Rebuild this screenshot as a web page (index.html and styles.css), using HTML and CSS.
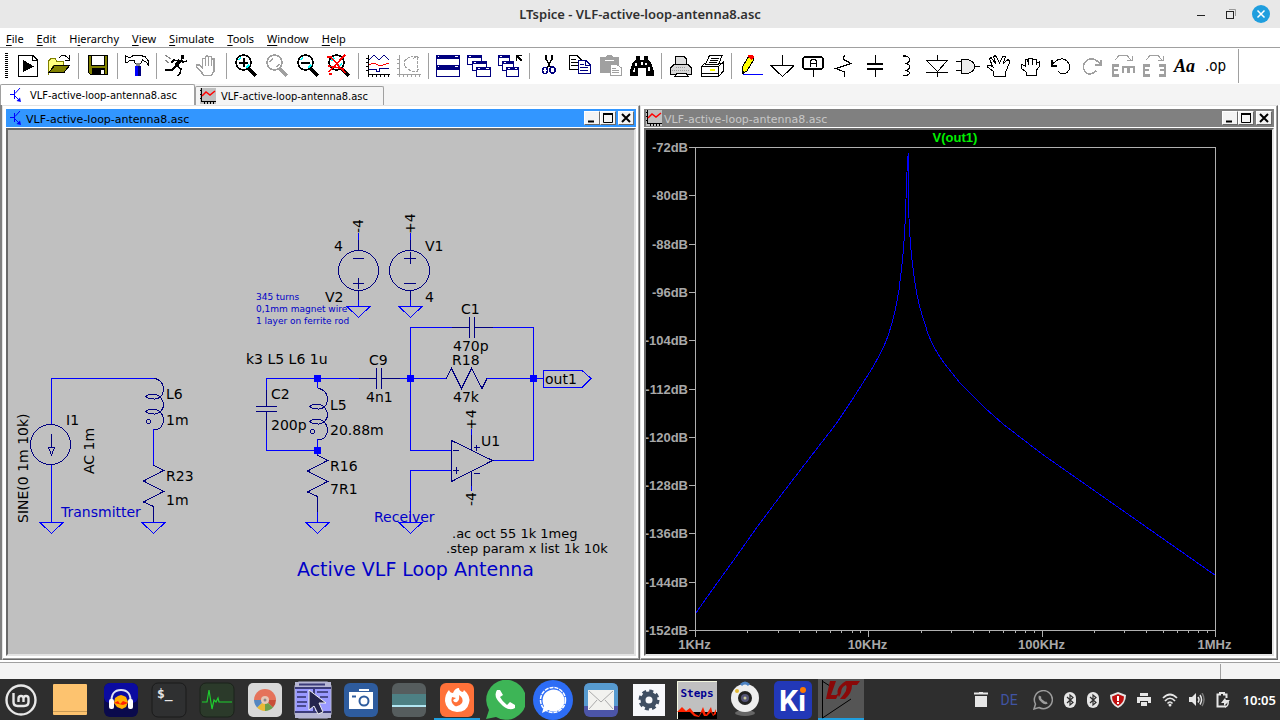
FILE: index.html
```html
<!DOCTYPE html>
<html lang="en">
<head>
    <meta charset="UTF-8">
    <meta name="viewport" content="width=device-width, initial-scale=1.0">
    <title>LTspice - VLF-active-loop-antenna8.asc</title>
    <link rel="stylesheet" href="styles.css">
</head>
<body>
    <!-- Shared icons -->
    <svg class="defs" width="0" height="0">
        <symbol id="ic-schematic" viewBox="0 0 12 16">
            <path d="M0 7.500H4M4.500 3V12M5 6.500L10 1M5 9L9 13" fill="none" stroke="#00f"/>
            <path d="M11 15L6.500 14L10 10.500Z" fill="#00f"/>
        </symbol>
        <symbol id="ic-plot" viewBox="0 0 16 16">
            <rect width="16" height="16" fill="#c0c0c0"/>
            <path d="M1.500 0V14M1 13.500H16M0 2.500H2M0 6.500H2M0 10.500H2M4.500 13V16M7.500 13V16M10.500 13V16M13.500 13V16" stroke="#000" fill="none"/>
            <path d="M2 8L6 4L10 7L15 3" stroke="#f00" stroke-width="1.500" fill="none"/>
        </symbol>
        <symbol id="ic-min" viewBox="0 0 10 10"><path d="M1 8.500H7" stroke="#000" stroke-width="2"/></symbol>
        <symbol id="ic-max" viewBox="0 0 10 10"><path d="M1 1.500H9M.500 1V9.500H9.500V1" fill="none" stroke="#000"/><path d="M0 1H10" stroke="#000" stroke-width="2"/></symbol>
        <symbol id="ic-close" viewBox="0 0 10 10"><path d="M1 1L9 9M9 1L1 9" stroke="#000" stroke-width="2"/></symbol>
        <symbol id="ic-lens" viewBox="0 0 24 24">
            <path d="M15 15L22 22" stroke="currentColor" stroke-width="3"/>
            <circle cx="9.500" cy="8.500" r="7.500" fill="#fff" stroke="currentColor" stroke-width="1.500"/>
        </symbol>
        <symbol id="ic-bluetooth" viewBox="0 0 12 16">
            <rect width="12" height="16" rx="6" fill="#e6e6e6"/>
            <path d="M3 5L9 10.500L6 13V3L9 5.500L3 11" fill="none" stroke="#2e2e2e" stroke-width="1.200"/>
        </symbol>
    </svg>

    <header class="titlebar">
        <h1>LTspice - VLF-active-loop-antenna8.asc</h1>
        <div class="titlebar-buttons">
            <button aria-label="Minimize"><svg width="10" height="10"><path d="M1 6.500H9" stroke="#222"/></svg></button>
            <button aria-label="Restore"><svg width="10" height="10"><path d="M3 .500H9.500V7" fill="none" stroke="#999"/><rect x=".500" y="2.500" width="7" height="7" fill="none" stroke="#222"/></svg></button>
            <button class="close" aria-label="Close"><svg width="10" height="10"><path d="M1.500 1.500L8.500 8.500M8.500 1.500L1.500 8.500" stroke="#fff" stroke-width="1.500"/></svg></button>
        </div>
    </header>

    <nav class="menubar">
        <button><u>F</u>ile</button>
        <button><u>E</u>dit</button>
        <button>H<u>i</u>erarchy</button>
        <button><u>V</u>iew</button>
        <button><u>S</u>imulate</button>
        <button><u>T</u>ools</button>
        <button><u>W</u>indow</button>
        <button><u>H</u>elp</button>
    </nav>

    <div class="toolbar">
        <span class="grip"></span>
        <button aria-label="New schematic"><svg viewBox="0 0 24 24"><path d="M2.500 1.500H17L21.500 6V22.500H2.500Z" fill="#fff" stroke="#000"/><path d="M16.500 1V6.500H22" fill="none" stroke="#000"/><path d="M7 6L18 12.500L7 18Z"/></svg></button>
        <button aria-label="Open"><svg viewBox="0 0 24 24"><path d="M1.500 20V7L4 4.500H8L9.500 7H16.500V11H7L1.500 20Z" fill="#ffff80" stroke="#808000"/><path d="M7.500 11.500H22.500L17 18.500H2Z" fill="#808000" stroke="#000"/><path d="M12 3.500L15 1.500H18L22 5M22.500 1V6H17.500" fill="none" stroke="#000"/></svg></button>
        <span class="sep"></span>
        <button aria-label="Save"><svg viewBox="0 0 24 24"><path d="M2.500 1.500H21.500V20.500H4.500L2.500 18.500Z" fill="#808000" stroke="#000"/><path d="M6 2H18V11H6Z" fill="#fff"/><path d="M5.500 2V11.500H18.500V2" fill="none" stroke="#000"/><path d="M6 14H19V20H6Z"/><path d="M15 16H18V20H15Z" fill="#fff"/></svg></button>
        <span class="sep"></span>
        <button aria-label="Control panel"><svg viewBox="0 0 24 24"><path d="M.500 2V8H3L5 6L9 6.500L10 9H16L17.500 6L21 8L23.500 11V7L20 2.500L15 1.500H8L5 4Z" fill="#fff" stroke="#000"/><path d="M11 9H15V13H11Z" fill="#888"/><path d="M10 12H16V22H10Z" fill="#00f"/><path d="M13 12H16V22H13Z" fill="#000080"/></svg></button>
        <span class="sep"></span>
        <button aria-label="Run"><svg viewBox="0 0 24 24"><path d="M17 1H20V5H17Z"/><path d="M16 6L12 12" stroke="#000" stroke-width="4"/><path d="M17 6L19 8L23 7M14 7L10 6L7 9M12 12L8 16H1M13 12L17 15L16 19L14 22" fill="none" stroke="#000" stroke-width="1.500"/><path d="M1 1L7 5M1 6L5 9" stroke="#888"/></svg></button>
        <button aria-label="Halt" disabled><svg viewBox="0 0 24 24"><path d="M7 19L1.500 13V11H4L7.500 14V4.500H10.500V2.500L12 1.500L13.500 3V2.500H16.500V5H19V17L16.500 21.500H9Z" fill="#fff" stroke="#a0a0a0" stroke-width="1.500"/><path d="M10.500 5V12M13.500 3V12M16.500 5V12" stroke="#a0a0a0" stroke-width="1.500"/></svg></button>
        <span class="sep"></span>
        <button aria-label="Zoom in"><svg viewBox="0 0 24 24"><use href="#ic-lens"/><path d="M4.500 6L7 3.500M12 14L15 11" stroke="#0ff" stroke-width="1.500"/><path d="M5 8.500H14M9.500 4V13" stroke="#000" stroke-width="2"/></svg></button>
        <button class="off" aria-label="Zoom to fit" disabled><svg viewBox="0 0 24 24"><use href="#ic-lens"/><path d="M5 8L8 4.500M12 13L14 10" stroke="#a0a0a0" stroke-width="1.500"/></svg></button>
        <button aria-label="Zoom out"><svg viewBox="0 0 24 24"><use href="#ic-lens"/><path d="M4.500 6L7 3.500M12 14L15 11" stroke="#0ff" stroke-width="1.500"/><path d="M5 8.500H14" stroke="#000" stroke-width="2"/></svg></button>
        <button aria-label="Zoom full"><svg viewBox="0 0 24 24"><use href="#ic-lens"/><path d="M4 7L7 4M11 13L15 10" stroke="#0ff" stroke-width="1.500"/><path d="M0 3L4 3L18 19M18 1L13 6L2 18M2 20H5M1 12L8 13L17 15" fill="none" stroke="#f00" stroke-width="1.500"/></svg></button>
        <span class="sep"></span>
        <button aria-label="Autorange"><svg viewBox="0 0 24 24"><path d="M2.500 1V23M2 20.500H24M0 4.500H3M0 8.500H3M0 12.500H3M0 16.500H3M6.500 20V23M10.500 20V23M14.500 20V23M18.500 20V23M22.500 20V23" stroke="#000" fill="none"/><path d="M3 6L8 1L13 6L18 1L23 6M3 15.500H10V17.500H13V14.500H23" stroke="#000080" fill="none"/><path d="M3 10.500L8 9L14 12L23 9" stroke="#f00" fill="none"/></svg></button>
        <button class="off" aria-label="Mark data points" disabled><svg viewBox="0 0 24 24"><path d="M2.500 1V23M0 20.500H24M0 5.500H3M0 9.500H3M0 14.500H3M6.500 20V23M10.500 20V23M14.500 20V23M18.500 20V23M22.500 20V23" stroke="#a0a0a0" fill="none"/><path d="M7 7L14 2H20V17H14L7 12ZM20 2L16 5M20 2L23 5M20 17L23 14" stroke="#a0a0a0" fill="none" stroke-dasharray="3 1"/></svg></button>
        <span class="sep"></span>
        <button aria-label="Tile windows"><svg viewBox="0 0 24 24"><path d="M.500 1.500H23.500V22.500H.500Z" fill="#fff" stroke="#000080"/><path d="M0 1H24V5H0ZM0 11H24V16H0Z" fill="#000080"/><path d="M2 2H3V3H2ZM19 2H22V3H19ZM2 12H3V13H2ZM19 12H22V13H19Z" fill="#fff"/></svg></button>
        <button aria-label="Cascade windows"><svg viewBox="0 0 24 24"><g fill="#fff" stroke="#000080"><path d="M.500 1.500H14.500V10.500H.500Z"/><path d="M5.500 7.500H19.500V16.500H5.500Z"/><path d="M9.500 13.500H23.500V22.500H9.500Z"/></g><path d="M0 1H15V4H0ZM5 7H20V10H5ZM9 13H24V16H9Z" fill="#000080"/><path d="M2 2H4V3H2ZM7 8H9V9H7ZM11 14H13V15H11ZM19 14H22V15H19Z" fill="#fff"/></svg></button>
        <button aria-label="Close windows"><svg viewBox="0 0 24 24"><g fill="#fff" stroke="#000080"><path d="M.500 1.500H11.500V11.500H.500Z"/><path d="M4.500 7.500H15.500V16.500H4.500Z"/><path d="M8.500 13.500H20.500V22.500H8.500Z"/></g><path d="M0 1H12V4H0ZM4 7H16V10H4ZM8 13H21V16H8Z" fill="#000080"/><path d="M2 2H4V3H2ZM6 8H8V9H6ZM10 14H12V15H10ZM17 14H19V15H17Z" fill="#fff"/><path d="M18.500 7V1.500H24M19 2L24 7" fill="none" stroke="#000" stroke-width="1.500"/></svg></button>
        <span class="sep"></span>
        <button aria-label="Cut"><svg viewBox="0 0 24 24"><path d="M9 1V5L14 14M15 1V5L10 14" fill="none" stroke="#000" stroke-width="1.500"/><ellipse cx="8" cy="16.500" rx="2.500" ry="3" fill="none" stroke="#000080" stroke-width="1.500"/><ellipse cx="15.500" cy="16" rx="2.500" ry="3" fill="none" stroke="#000080" stroke-width="1.500"/></svg></button>
        <button aria-label="Copy"><svg viewBox="0 0 24 24"><path d="M1.500 1.500H9L13.500 6V15.500H1.500Z" fill="#fff" stroke="#000"/><path d="M3 5.500H8M3 8.500H11M3 11.500H11" stroke="#000"/><path d="M10.500 6.500H18L22.500 11V19.500H10.500Z" fill="#fff" stroke="#000080"/><path d="M17.500 6V11.500H22M12 10.500H16M12 13.500H20M12 16.500H20" fill="none" stroke="#000080"/></svg></button>
        <button aria-label="Paste" disabled><svg viewBox="0 0 24 24"><path d="M1 3H7L8 1H13L14 3H20V19H1Z" fill="#a0a0a0"/><path d="M6 6.500H15" stroke="#fff"/><path d="M11.500 10.500H18L22.500 14V21.500H11.500Z" fill="#fff" stroke="#a0a0a0"/><path d="M13 14.500H17M13 16.500H20M13 18.500H20" stroke="#a0a0a0"/></svg></button>
        <button aria-label="Find"><svg viewBox="0 0 24 24"><path d="M6 2H10V6H14V2H18V6L21 8L24 17V22H16V14H8V22H0V17L3 8L6 6Z"/><path d="M5 9H7V12H5ZM4 14H5V18H3ZM15 9H17V11H15ZM18 13H20V17H18ZM11 8H13V11H11Z" fill="#fff"/></svg></button>
        <span class="sep"></span>
        <button aria-label="Print setup"><svg viewBox="0 0 24 24"><path d="M6.500 11V2.500H15L17.500 5V11" fill="#ddd" stroke="#000"/><path d="M1.500 14L5 10.500H19L22.500 14V20.500H1.500Z" fill="#d8d8d8" stroke="#000"/><path d="M7 13.500H17M3 16.500H21" stroke="#999" stroke-dasharray="1 1"/><path d="M7 21V19.500H17L19 22.500H6Z" fill="#fff" stroke="#000"/></svg></button>
        <button aria-label="Print"><svg viewBox="0 0 24 24"><path d="M1.500 12.500H18.500V22.500H1.500ZM18.500 12.500L23.500 8V17L18.500 22.500M1.500 12.500L5 9H22" fill="#fff" stroke="#000"/><path d="M5.500 10.500L9.500 1.500H22L18.500 10.500Z" fill="#fff" stroke="#000"/><path d="M11 4.500H19M10 6.500H18M9 8.500H17M2 19.500H18" stroke="#000"/><path d="M10 15H15V17H10Z" fill="#ff0"/></svg></button>
        <span class="sep"></span>
        <button aria-label="Wire"><svg viewBox="0 0 24 24"><path d="M9 3H14V7L8 17L3 20V14Z" fill="#ff0" stroke="#000"/><path d="M9 1H13L15 3L13 6L9 3Z" fill="#f00"/><path d="M3 16L6 18L3 20Z"/><path d="M4 20.500H24" stroke="#00f"/></svg></button>
        <button aria-label="Ground"><svg viewBox="0 0 24 24"><path d="M12.500 1V12M1 11.500H24L12.500 22.500Z" fill="none" stroke="#000" stroke-width="1.200"/></svg></button>
        <button aria-label="Label net"><svg viewBox="0 0 24 24"><path d="M12.500 16V23" stroke="#000"/><rect x="2" y="3" width="20" height="12" rx="2" fill="#fff" stroke="#000" stroke-width="1.500"/><path d="M9.500 13V7L11 5.500H14L15.500 7V13M9 9.500H16" fill="none" stroke="#000" stroke-width="1.500"/></svg></button>
        <button aria-label="Resistor"><svg viewBox="0 0 24 24"><path d="M12.500 1L11 5L19 9.500L4 14.500L12.500 18V23" fill="none" stroke="#000" stroke-width="1.200"/></svg></button>
        <button aria-label="Capacitor"><svg viewBox="0 0 24 24"><path d="M12.500 1V10M12.500 15V23" stroke="#000"/><path d="M4 10H20M4 15H20" stroke="#000" stroke-width="2"/></svg></button>
        <button aria-label="Inductor"><svg viewBox="0 0 24 24"><path d="M9 2H12Q15.500 3 15.500 6Q15.500 9 11 9.500Q15.500 10 15.500 12.500Q15.500 16 11 16.500Q15.500 17 15.500 19Q15 22 9 21.500" fill="none" stroke="#000" stroke-width="1.200"/></svg></button>
        <button aria-label="Diode"><svg viewBox="0 0 24 24"><path d="M12.500 1V6M1 6.500H23M2 7L12.500 17.500L22 7M1 18.500H23M12.500 18V23" fill="none" stroke="#000"/></svg></button>
        <button aria-label="Component"><svg viewBox="0 0 24 24"><path d="M0 7.500H5M0 16.500H5M18 12.500H24" stroke="#000"/><path d="M5.500 5.500H12Q18 7 18.500 12.500Q18 18 12 19.500H5.500Z" fill="#eee" stroke="#000"/></svg></button>
        <button aria-label="Move"><svg viewBox="0 0 24 24"><path d="M7 22L6 17L.500 13V11H3L6 13L2.500 5L4 3.500L9 10L6.500 2.500L8.500 1.500L12.500 9L16 2.500L18.500 3L16 10L21 5.500L23 7L20 15L18 19V22Z" fill="#fff" stroke="#000"/></svg></button>
        <button aria-label="Drag"><svg viewBox="0 0 24 24"><path d="M8 21V18L3 14V10L7 12V6L9 5L10 8V4H14L14.500 8V5H18V9L21 8V13L18 17V21Z" fill="#fff" stroke="#000"/><path d="M10 8V11M14.500 8V11M18 8V11" stroke="#000"/></svg></button>
        <button aria-label="Undo"><svg viewBox="0 0 24 24"><path d="M3 11Q9 3 16 5.500Q21.500 9 20.500 15Q18 20 14 20Q10 19 9 17" fill="none" stroke="#000"/><path d="M3 6V12H8" fill="none" stroke="#000" stroke-width="2"/></svg></button>
        <button aria-label="Redo" disabled><svg viewBox="0 0 24 24"><path d="M21 11Q15 3 8 5.500Q2.500 9 3.500 15Q6 20 10 20Q14 19 16 17" fill="none" stroke="#a0a0a0" stroke-width="1.500"/><path d="M21 6V11H15" fill="none" stroke="#a0a0a0" stroke-width="1.500"/></svg></button>
        <button aria-label="Rotate" disabled><svg viewBox="0 0 24 24"><path d="M4 6L8 1.500H16L20 6M21.500 2V6.500H16" fill="none" stroke="#a0a0a0"/><path d="M8 11.500H2V21.500H8M2 16H7" fill="none" stroke="#a0a0a0" stroke-width="2.500"/><path d="M11 13H24M12 12V19M17.500 12V19M23 12V19" stroke="#a0a0a0" stroke-width="2.500"/></svg></button>
        <button aria-label="Mirror" disabled><svg viewBox="0 0 24 24"><path d="M4 6L8 1.500H16L20 6M21.500 2V6.500H16" fill="none" stroke="#a0a0a0"/><path d="M8 11.500H2V21.500H8M2 16H7M17 11.500H23V21.500H17M23 16H18" fill="none" stroke="#a0a0a0" stroke-width="2.500"/></svg></button>
        <button class="glyph glyph-italic">Aa</button>
        <button class="glyph">.op</button>
        <span class="sep last"></span>
    </div>

    <div class="tabs">
        <button class="tab active"><svg width="12" height="16"><use href="#ic-schematic"/></svg>VLF-active-loop-antenna8.asc</button>
        <button class="tab"><svg width="16" height="16"><use href="#ic-plot"/></svg>VLF-active-loop-antenna8.asc</button>
    </div>

    <main class="workspace">
        <section class="window">
            <div class="window-title active">
                <svg width="12" height="16"><use href="#ic-schematic"/></svg>
                <h2>VLF-active-loop-antenna8.asc</h2>
                <button aria-label="Minimize"><svg width="10" height="10"><use href="#ic-min"/></svg></button>
                <button aria-label="Maximize"><svg width="10" height="10"><use href="#ic-max"/></svg></button>
                <button class="close" aria-label="Close"><svg width="10" height="10"><use href="#ic-close"/></svg></button>
            </div>
            <div class="client">
                <svg class="schematic">
                    <defs>
                        <path id="gnd" d="M-11 .500H12L.500 11.500Z"/>
                        <path id="coil" d="M0 0C6 0 10 5 10 10C10 18 5 21 0 20.500C-5 20 -7 19 -7.500 18C-5 15 4 15 7 19C9 21 10 24 10 26C10 32 5 36 0 35.500C-5 35 -7 34 -7.500 33C-5 30 4 30 7 34C9 36 10 38 10 42C10 46 7 50 4 51H0"/>
                        <path id="res" d="M0 0L10 5.500L-10 16L10 26.500L-10 37L0 41.500V57"/>
                    </defs>
                    <!-- shifted so that the sheet starts at 8,130 -->
                    <g transform="translate(-8 -130)">
                        <g class="wire">
                            <path d="M51.500 425V378.500H154M51.500 464V522M153.500 429V465M153.500 510V522M317.500 510V522"/>
                            <path d="M317.500 378.500H266.500V402M266.500 415V450.500H317.500V455M317.500 378V388M317.500 439V450"/>
                            <path d="M317 378.500H371M387 378.500H446M410.500 450V327.500H464M480 327.500H533.500V460.500H492M410 450.500H451M451 470.500H410.500V522"/>
                            <path d="M487 378.500H543M543.500 370.500H582L591 378.500L582 387.500H543.500Z"/>
                            <path d="M358.500 233V245M410.500 233V245M358.500 295V306M410.500 295V306M471.500 429V440M471.500 480V491"/>
                            <use href="#gnd" x="51" y="522"/>
                            <use href="#gnd" x="153" y="522"/>
                            <use href="#gnd" x="317" y="522"/>
                            <use href="#gnd" x="410" y="522"/>
                            <use href="#gnd" x="358" y="306"/>
                            <use href="#gnd" x="410" y="306"/>
                        </g>
                        <g class="part">
                            <circle cx="50.500" cy="444.500" r="20"/>
                            <path d="M51.500 434V447M48.500 447.500H54.500L51.500 455Z"/>
                            <use href="#coil" x="153.500" y="378.500"/>
                            <use href="#coil" x="317.500" y="388.500"/>
                            <circle cx="148.500" cy="421.500" r="2"/>
                            <circle cx="312.500" cy="431.500" r="2"/>
                            <use href="#res" x="153.500" y="465"/>
                            <use href="#res" x="317.500" y="455"/>
                            <path d="M446 378.500L451.500 368.500L461.500 388.500L471.500 368.500L482 388.500L487 378.500"/>
                            <path d="M256 406.500H277M256 411.500H277M266.500 390V406M266.500 412V430"/>
                            <path d="M376.500 368V389M381.500 368V389M359 378.500H376M382 378.500H400"/>
                            <path d="M469.500 317V338M474.500 317V338M452 327.500H469M475 327.500H493"/>
                            <circle cx="358.500" cy="270.500" r="20"/>
                            <path d="M358.500 240V250M358.500 290V300M353 258.500H364M353 283.500H364M358.500 278V289"/>
                            <circle cx="409.500" cy="270.500" r="20"/>
                            <path d="M410.500 240V250M410.500 290V300M404 258.500H416M410.500 252V264M404 283.500H416"/>
                            <path d="M451.500 440.500L492.500 460.500L451.500 481.500ZM453 450.500H459M453 470.500H459M456.500 467V474M471.500 435V450M471.500 471V486M474 447.500H480M476.500 445V451M474 473.500H480"/>
                        </g>
                        <g class="junction">
                            <path d="M314 375H321V382H314ZM314 447H321V454H314ZM407 375H414V382H407ZM530 375H537V382H530Z"/>
                        </g>
                        <g class="label">
                            <text x="66" y="425">I1</text>
                            <text transform="translate(28 523) rotate(-90)">SINE(0 1m 10k)</text>
                            <text transform="translate(94 474) rotate(-90)">AC 1m</text>
                            <text x="166" y="399">L6</text>
                            <text x="166" y="425">1m</text>
                            <text x="166" y="481">R23</text>
                            <text x="166" y="505">1m</text>
                            <text x="246" y="364">k3 L5 L6 1u</text>
                            <text x="271" y="399">C2</text>
                            <text x="271" y="430">200p</text>
                            <text x="330" y="410">L5</text>
                            <text x="330" y="435">20.88m</text>
                            <text x="330" y="471">R16</text>
                            <text x="330" y="494">7R1</text>
                            <text x="369" y="365">C9</text>
                            <text x="366" y="402">4n1</text>
                            <text x="461" y="314">C1</text>
                            <text x="453" y="351">470p</text>
                            <text x="452" y="365">R18</text>
                            <text x="453" y="402">47k</text>
                            <text x="481" y="446">U1</text>
                            <text x="545" y="384">out1</text>
                            <text x="334" y="251">4</text>
                            <text x="325" y="302">V2</text>
                            <text x="425" y="251">V1</text>
                            <text x="425" y="302">4</text>
                            <text transform="translate(363 233) rotate(-90)">-4</text>
                            <text transform="translate(415 234) rotate(-90)">+4</text>
                            <text transform="translate(476 430) rotate(-90)">+4</text>
                            <text transform="translate(476 506) rotate(-90)">-4</text>
                        </g>
                        <g class="directive">
                            <text x="452" y="538">.ac oct 55 1k 1meg</text>
                            <text x="446" y="553">.step param x list 1k 10k</text>
                        </g>
                        <g class="comment">
                            <text x="61" y="517">Transmitter</text>
                            <text x="374" y="522">Receiver</text>
                            <text class="heading" x="297" y="576">Active VLF Loop Antenna</text>
                            <text class="small" x="256" y="300">345 turns</text>
                            <text class="small" x="256" y="312">0,1mm magnet wire</text>
                            <text class="small" x="256" y="324">1 layer on ferrite rod</text>
                        </g>
                    </g>
                </svg>
            </div>
        </section>

        <section class="window">
            <div class="window-title">
                <svg width="16" height="16"><use href="#ic-plot"/></svg>
                <h2>VLF-active-loop-antenna8.asc</h2>
                <button aria-label="Minimize"><svg width="10" height="10"><use href="#ic-min"/></svg></button>
                <button aria-label="Maximize"><svg width="10" height="10"><use href="#ic-max"/></svg></button>
                <button class="close" aria-label="Close"><svg width="10" height="10"><use href="#ic-close"/></svg></button>
            </div>
            <div class="client dark">
                <svg class="plot">
                    <g transform="translate(-646 -130)">
                        <text class="trace-name" x="955" y="142">V(out1)</text>
                        <rect class="axis" x="695.500" y="147.500" width="520" height="483"/>
                        <path class="axis" id="ticks" d=""/>
                        <g id="labels"></g>
                        <path class="trace" d="M695.500 613.500L715 586L734.500 559L755 530L775 503L805 464L836 424L852 400L859 389L866 378L873 367L879 356L884 346L888 336L892 323L895 311L897 301L899 290L900.500 277L901.500 269L902.500 260L903.500 248L904.500 234L905.500 214L906.500 184L907.500 160L908.500 153L908.500 206L909.500 230L910.500 244L911.500 256L913 268L915 283L917 295L920 308L923 318L926 327L928 334L933 345L938 354L944 363L952 373L960 383L985 408L1003 424L1042 454L1215.500 575.500"/>
                    </g>
                </svg>
            </div>
        </section>
    </main>

    <footer class="statusbar"><span></span><span class="status-end"></span></footer>

    <div class="taskbar">
        <div class="launchers">
            <button class="start" aria-label="Menu"><svg width="36" height="36"><circle cx="18" cy="18" r="14.500" fill="none" stroke="#e8e8e8" stroke-width="2.400"/><path d="M10.500 11V20Q10.500 24 14.500 24H21Q25.500 24 25.500 20V16.500Q25.500 14 23 14Q20.500 14 20.500 16.500V20M20.500 16.500Q20.500 14 18 14Q15.500 14 15.500 16.500V20" fill="none" stroke="#e8e8e8" stroke-width="2.400"/></svg></button>
            <button class="files" aria-label="Files"><svg width="36" height="36"><rect x="1" y="2" width="34" height="31" rx="1" fill="#fdc36f"/><path d="M1 29.500H35" stroke="#c99a55"/></svg></button>
            <button aria-label="Audacity"><svg width="36" height="36"><rect x="1" y="1" width="34" height="34" rx="6" fill="#0a0a4c"/><rect x="1" y="1" width="34" height="20" rx="6" fill="#0b0ba0"/><path d="M8.500 20Q8 8 18 8Q28 8 27.500 20" fill="none" stroke="#dfe3f5" stroke-width="2"/><path d="M12 16L15 14L18 13L21 14L23 15L25 20L23 25L19 27L14 25L11 21Z" fill="#ffb000"/><path d="M11 21L15 19L17 22L20 19L25 21L20 23Z" fill="#f20"/><rect x="6" y="17" width="5" height="10" rx="2" fill="#fff"/><rect x="25" y="17" width="5" height="10" rx="2" fill="#fff"/></svg></button>
            <button aria-label="Terminal"><svg width="36" height="36"><rect x="1" y="1" width="34" height="34" rx="6" fill="#2f3031" stroke="#1b1b1b"/><text class="prompt" x="6" y="16">$_</text></svg></button>
            <button aria-label="System monitor"><svg width="36" height="36"><rect x="1" y="1" width="34" height="34" rx="6" fill="#2b3a2a" stroke="#1b221a"/><path d="M3 20H8L10 8L13 27L15 18L17 20L19 16L20 20H33" fill="none" stroke="#1fcf2f" stroke-width="1.200"/></svg></button>
            <button aria-label="Disk usage"><svg width="36" height="36"><rect x="1" y="1" width="34" height="34" rx="5" fill="#d8d8d8"/><path d="M18 18L7 18A11 11 0 0 1 29 18Z" fill="#e5725a"/><path d="M18 18H29A11 11 0 0 1 26 25.500Z" fill="#c84f3a"/><path d="M18 18L26 25.500A11 11 0 0 1 18 29Z" fill="#6c9e4a"/><path d="M18 18V29A11 11 0 0 1 10 25.500Z" fill="#e9b935"/><path d="M18 18L10 25.500A11 11 0 0 1 7 18Z" fill="#5486c0"/><circle cx="18" cy="18" r="4" fill="#e6c6b6"/><circle cx="18" cy="18" r="1.500" fill="#888"/></svg></button>
            <button aria-label="Window manager"><svg width="38" height="38"><rect x="1" y="1" width="36" height="36" rx="4" fill="#9999ff" stroke="#b9b9d9"/><path d="M1 1H37V6H1ZM1 32H37V37H1Z" fill="#b6b6d4"/><path d="M5 3.500H31M1 7H37M1 31H37M20 7V31" stroke="#3b3b7a" stroke-width="2"/><path d="M3 11H13M3 16H12M3 21H13M3 25H12M23 11H34M26 16H34" stroke="#30306a" stroke-width="1.500"/><path d="M15 9L32 22H25L29 31L24 33L20 25L15 29Z" fill="#25254d" stroke="#eee"/></svg></button>
            <button aria-label="Screenshot"><svg width="36" height="36"><rect x="1" y="1" width="34" height="34" rx="6" fill="#2e5c9e"/><rect x="6" y="10" width="24" height="17" fill="#fff"/><path d="M16 8H26" stroke="#fff" stroke-width="2"/><circle cx="21" cy="19" r="4.500" fill="#fff" stroke="#2e5c9e" stroke-width="2"/><path d="M9 14.500H13" stroke="#2e5c9e" stroke-width="2"/></svg></button>
            <button aria-label="Desktop"><svg width="36" height="36"><rect x="1" y="1" width="34" height="34" rx="6" fill="#565d5e"/><path d="M1 12H35V23H1Z" fill="#4d8084"/><path d="M1 24H35" stroke="#b2e6f2" stroke-width="2"/></svg></button>
            <button class="running" aria-label="Firefox"><svg width="36" height="36"><rect x="1" y="1" width="34" height="34" rx="6" fill="#ff7139"/><path d="M6 19Q6 12 10 8Q11 11 14 11Q16 6 20 6Q20 9 24 10L25 8Q32 14 30 21Q28 30 18 30Q7 29 6 19Z" fill="#fff"/><path d="M13 15L17 16L14 18Q15 21 18 20Q21 18 20 13Q25 16 23 21Q20 25 16 24Q11 21 13 15Z" fill="#ff7139"/></svg></button>
            <button aria-label="WhatsApp"><svg width="40" height="40"><path d="M1 39L4 30A20 20 0 1 1 11 37Z" fill="#3db556"/><path d="M12 10Q8 16 15 23Q23 32 30 28L30 25L25 22L22 25Q17 21 15 17L18 15L15 10Z" fill="#fff"/></svg></button>
            <button aria-label="Signal"><svg width="40" height="40"><circle cx="20" cy="20" r="20" fill="#2d6df6"/><circle cx="20" cy="20" r="12.500" fill="none" stroke="#fff" stroke-width="1.500" stroke-dasharray="4 1"/><path d="M9 33L11 26A11 11 0 1 1 15 30Z" fill="#fff"/></svg></button>
            <button aria-label="Mail"><svg width="36" height="36"><rect x="1" y="1" width="34" height="34" rx="6" fill="#4c55a8"/><path d="M1 24V7Q1 1 7 1H29Q35 1 35 7V24Z" fill="#579bd0"/><rect x="5" y="8" width="26" height="20" fill="#f2f2ef"/><path d="M6 9L18 20L30 9M6 27L14 18M30 27L22 18" fill="none" stroke="#aaa"/></svg></button>
            <button aria-label="Settings"><svg width="32" height="32"><rect width="32" height="32" fill="#f7f8fb"/><circle cx="16" cy="16" r="9" fill="none" stroke="#3f4e62" stroke-width="3" stroke-dasharray="4 3.070"/><circle cx="16" cy="16" r="6" fill="none" stroke="#3f4e62" stroke-width="5"/></svg></button>
            <button aria-label="Steps"><svg width="40" height="38"><rect width="40" height="38" fill="#c0c0c0"/><path d="M0 31H40V38H0Z"/><path d="M.500 38V.500H40" fill="none" stroke="#f4f8e0"/><text class="steps" x="20" y="16">Steps</text><path d="M0 31L5 26L9 30L13 27L18 33L22 35L26 26L29 34L34 26L36 34L39 28V33L36 35L34 31L30 35H27L25 31L22 36L17 35L13 31H1Z" fill="#f20"/></svg></button>
            <button aria-label="Webcam"><svg width="36" height="40"><ellipse cx="18" cy="33" rx="10" ry="3" fill="#666"/><circle cx="18" cy="18" r="14" fill="#eee"/><path d="M14 5Q18 1 22 5" stroke="#4d83c4" stroke-width="3" fill="none"/><circle cx="18" cy="18" r="7" fill="#222"/><circle cx="18" cy="18" r="4" fill="#557"/><circle cx="18" cy="18" r="1.500" fill="#cc9"/><circle cx="10" cy="11" r="2" fill="#e4ba32"/></svg></button>
            <button aria-label="KiCad"><svg width="38" height="38"><rect width="38" height="38" rx="5" fill="#2238b8"/><text class="kicad" x="5" y="30">K&#305;</text><circle cx="29" cy="9" r="3" fill="#ff7a00"/></svg></button>
            <button class="running current" aria-label="LTspice"><svg width="46" height="39"><path d="M4.500 0V38L33 19M4 1L12 6" stroke="#000" fill="none"/><path d="M12 1H18L13 15H18L21 13L18 19H8Z" fill="#8a0808"/><path d="M28 1H42L39 5H34Q34 13 27 19H22Q31 9 28 5Q23 7 23 13L21 17Q16 8 28 1Z" fill="#8a0808"/></svg></button>
        </div>
        <div class="tray">
            <svg width="14" height="16"><path d="M0 1.500H14M5 .500H9" stroke="#e6e6e6" stroke-width="2"/><path d="M1 4H13V15H1Z" fill="#e6e6e6"/></svg>
            <span class="lang">DE</span>
            <svg width="20" height="20"><path d="M1 19L2.500 14A9 9 0 1 1 6 17.500Z" fill="none" stroke="#9c9c9c" stroke-width="1.500"/><path d="M7 6Q6 9 9 11Q12 14 14 12.500" fill="none" stroke="#9c9c9c" stroke-width="2.500"/></svg>
            <svg width="12" height="16"><use href="#ic-bluetooth"/></svg>
            <svg width="12" height="16"><use href="#ic-bluetooth"/></svg>
            <svg width="16" height="16"><path d="M8 0L16 3Q16 12 8 16Q0 12 0 3Z" fill="#e6e6e6"/><path d="M8 2L14 4.500Q14 11 8 14Q2 11 2 4.500Z" fill="#c01010"/><path d="M8 4V9M8 10V12" stroke="#fff" stroke-width="2"/></svg>
            <svg width="14" height="14"><path d="M3 0H11V3H3ZM0 4H14V10H11V8H3V10H0ZM4 9H10V13H4Z" fill="#e6e6e6"/></svg>
            <svg width="16" height="14"><path d="M1 5Q8 -2 15 5M3 8Q8 2.500 13 8M5.500 10.500Q8 7.500 10.500 10.500" fill="none" stroke="#e6e6e6" stroke-width="1.700"/><circle cx="8" cy="12" r="1.500" fill="#e6e6e6"/></svg>
            <svg width="16" height="14"><path d="M0 4H3L7 0V13L3 9H0Z" fill="#e6e6e6"/><path d="M9 4Q11 6.500 9 9.500M11 2Q14 6.500 11 11.500" fill="none" stroke="#e6e6e6" stroke-width="1.500"/><path d="M13 0Q17 6.500 13 13" fill="none" stroke="#777" stroke-width="1.500"/></svg>
            <svg width="16" height="16"><path d="M10 14.500H1.500V2.500H4V1H8V2.500H10.500V6" fill="none" stroke="#e6e6e6" stroke-width="2"/><path d="M9 6L5 11H8V14L14 8H10Z" fill="#e6e6e6"/><path d="M9 15Q13 14 12 9" fill="none" stroke="#e6e6e6" stroke-width="1.500"/></svg>
            <time>10:05</time>
        </div>
    </div>

    <script>
        const ticks = document.getElementById('ticks');
        const labels = document.getElementById('labels');
        const left = 695.5, top0 = 147.5, bottom = 630.5, width = 520;
        let d = '';

        function addLabel(text, x, y, cls) {
            const el = document.createElementNS('http://www.w3.org/2000/svg', 'text');
            el.setAttribute('x', x);
            el.setAttribute('y', y);
            el.setAttribute('class', cls);
            el.textContent = text;
            labels.appendChild(el);
        }

        // dB axis, one tick every 8 dB
        for (let i = 0; i <= 10; i++) {
            const y = Math.floor(top0 + i * (bottom - top0) / 10) + 0.5;
            d += `M689 ${y}H695`;
            addLabel(`${-72 - i * 8}dB`, 688, y + 4, 'y-label');
        }

        // Frequency axis, three decades
        ['1KHz', '10KHz', '100KHz', '1MHz'].forEach((name, i) => {
            const x = Math.floor(left + i * width / 3) + 0.5;
            d += `M${x} 631V637`;
            addLabel(name, x - 1, 649, 'x-label');
            for (let k = 2; k < 10 && i < 3; k++) {
                const minor = Math.floor(left + (i + Math.log10(k)) * width / 3) + 0.5;
                d += `M${minor} 631V633`;
            }
        });

        ticks.setAttribute('d', d);
    </script>
</body>
</html>
```
FILE: styles.css
```css
* {
    box-sizing: border-box;
}

body {
    margin: 0;
    height: 100vh;
    display: flex;
    flex-direction: column;
    overflow: hidden;
    background-color: #f4f4f4;
    color: #000;
    font-family: "Noto Sans", sans-serif;
    font-size: 11px;
}

button {
    margin: 0;
    padding: 0;
    border: none;
    background: none;
    color: inherit;
    font: inherit;
}

svg {
    display: block;
    flex: none;
}

.defs {
    position: absolute;
}

h1,
h2 {
    margin: 0;
}

/* Main window title */
.titlebar {
    flex: none;
    height: 28px;
    display: grid;
    grid-template-columns: 1fr auto 1fr;
    align-items: center;
    background-color: #e8e8e8;
}

.titlebar h1 {
    grid-column: 2;
    color: #303030;
    font-size: 13px;
    font-weight: 600;
}

.titlebar-buttons {
    display: flex;
    justify-content: flex-end;
    align-items: center;
    gap: 12px;
    padding-right: 10px;
}

.titlebar-buttons button {
    width: 18px;
    height: 18px;
    display: grid;
    place-items: center;
    border-radius: 50%;
}

.titlebar-buttons .close {
    background-color: #1f9ede;
}

/* Menu and toolbar */
.menubar {
    flex: none;
    height: 20px;
    display: flex;
    align-items: center;
    background-color: #fff;
    border-bottom: 1px solid #a0a0a0;
}

.menubar button {
    height: 19px;
    padding: 3px 7px 0 6px;
    line-height: 16px;
}

.menubar u {
    text-underline-offset: 2px;
}

.toolbar {
    flex: none;
    height: 36px;
    display: flex;
    align-items: center;
    background-color: #fff;
}

.toolbar button {
    width: 31px;
    height: 32px;
    display: grid;
    place-items: center;
}

.toolbar svg {
    width: 24px;
    height: 24px;
    shape-rendering: crispEdges;
}

.toolbar .off {
    color: #a0a0a0;
}

.grip {
    width: 3px;
    height: 26px;
    margin: 0 4px 0 5px;
    background: repeating-linear-gradient(#000 0 1px, #fff 1px 2px);
}

.sep {
    width: 8px;
    height: 26px;
    background: linear-gradient(#a0a0a0, #a0a0a0) center / 1px 100% no-repeat;
}

.sep.last {
    height: 34px;
    background-position: right;
}

.toolbar .glyph {
    font-family: "DejaVu Sans Condensed", "DejaVu Sans", sans-serif;
    font-size: 15px;
}

.toolbar .glyph-italic {
    font-family: "Liberation Serif", serif;
    font-size: 18px;
    font-style: italic;
    font-weight: bold;
}

/* Document tabs */
.tabs {
    flex: none;
    height: 21px;
    display: flex;
    align-items: flex-end;
    font-family: "DejaVu Sans Condensed", "DejaVu Sans", sans-serif;
}

.tab {
    height: 19px;
    display: flex;
    align-items: center;
    gap: 5px;
    padding: 0 15px 0 4px;
    border: 1px solid #a0a0a0;
    border-bottom: none;
    border-radius: 2px 2px 0 0;
}

.tab.active {
    height: 21px;
    gap: 8px;
    padding: 0 17px 0 9px;
    background-color: #fff;
}

/* MDI area */
.workspace {
    flex: 1;
    min-height: 0;
    display: grid;
    grid-template-columns: 1fr 1fr;
    padding: 0 2px;
    background-color: #fff;
    box-shadow: inset 2px 0 0 #808080;
}

.window {
    min-width: 0;
    display: flex;
    flex-direction: column;
    padding: 3px;
    border: 1px solid;
    border-color: #e3e3e3 #696969 #696969 #e3e3e3;
    box-shadow: inset -1px -1px 0 #a0a0a0;
    background-color: #fff;
}

.window-title {
    flex: none;
    height: 18px;
    display: flex;
    align-items: center;
    padding: 0 2px;
    background-color: #808080;
    color: #c8c8c8;
}

.window-title.active {
    padding-left: 4px;
    background-color: #3296ff;
    color: #000;
}

.window-title h2 {
    flex: 1;
    padding: 2px 0 0 2px;
    font-family: "DejaVu Sans", sans-serif;
    font-size: 11px;
    font-weight: normal;
}

.window-title.active h2 {
    padding-left: 4px;
}

.window-title button {
    width: 16px;
    height: 14px;
    display: grid;
    place-items: center;
    border: 1px solid;
    border-color: #fff #696969 #696969 #fff;
    background-color: #f4f4f4;
}

.window-title .close {
    margin-left: 2px;
}

.client {
    flex: 1;
    min-height: 0;
    margin-top: 1px;
    border: 2px solid;
    border-color: #696969 #e3e3e3 #e3e3e3 #696969;
    background-color: #c0c0c0;
}

.client.dark {
    background-color: #000;
}

/* Schematic */
.schematic,
.plot {
    width: 100%;
    height: 100%;
}

.schematic {
    font-family: "DejaVu Sans", sans-serif;
    font-size: 14px;
}

.wire,
.part {
    fill: none;
    shape-rendering: crispEdges;
}

.wire {
    stroke: #00f;
}

.part {
    stroke: #000080;
}

.junction {
    fill: #00f;
}

.directive {
    font-size: 13px;
}

.comment {
    fill: #0000c8;
}

.comment .heading {
    font-size: 19px;
}

.comment .small {
    font-size: 9px;
}

/* Waveform plot */
.plot {
    fill: #a8a8a8;
    font-family: "Liberation Sans", sans-serif;
    font-size: 13px;
    font-weight: bold;
}

.axis {
    fill: none;
    stroke: #b0b0b0;
    shape-rendering: crispEdges;
}

.trace {
    fill: none;
    stroke: #00f;
    shape-rendering: crispEdges;
}

.trace-name {
    fill: #00f000;
    text-anchor: middle;
}

.y-label {
    text-anchor: end;
}

.x-label {
    text-anchor: middle;
}

.statusbar {
    flex: none;
    height: 19px;
    display: flex;
    justify-content: space-between;
    padding-top: 3px;
    background: linear-gradient(#fff 2px, #a0a0a0 2px 3px, #f4f4f4 3px);
}

.status-end {
    width: 60px;
    margin-top: 1px;
    border-left: 1px solid #a0a0a0;
}

/* Taskbar */
.taskbar {
    flex: none;
    height: 41px;
    display: flex;
    justify-content: space-between;
    background-color: #2e2e2e;
}

.launchers {
    display: flex;
}

.launchers button {
    width: 48px;
    height: 41px;
    display: grid;
    place-items: center;
}

.launchers .start {
    width: 42px;
}

.launchers .files {
    width: 55px;
}

.launchers .running {
    background: linear-gradient(#1f9ede, #1f9ede) bottom / 46px 2px no-repeat;
}

.launchers .current {
    background:
        linear-gradient(#1f9ede, #1f9ede) bottom / 46px 2px no-repeat,
        linear-gradient(#555, #555) center / 46px 100% no-repeat;
}

.prompt {
    fill: #e6e6e6;
    font-family: "DejaVu Sans Mono", monospace;
    font-size: 13px;
    font-weight: bold;
}

.steps {
    fill: #000090;
    font-family: "DejaVu Sans Mono", monospace;
    font-size: 11px;
    font-weight: bold;
    text-anchor: middle;
}

.kicad {
    fill: #fff;
    font-family: Roboto, sans-serif;
    font-size: 30px;
    font-weight: bold;
}

.tray {
    display: flex;
    align-items: center;
    gap: 11px;
    padding-right: 4px;
    color: #fff;
}

.lang {
    margin: 0 4px 0 2px;
    color: #4054a4;
    font-family: Roboto, sans-serif;
    font-size: 14px;
}

.tray time {
    font-size: 13px;
    font-weight: 600;
}
```
